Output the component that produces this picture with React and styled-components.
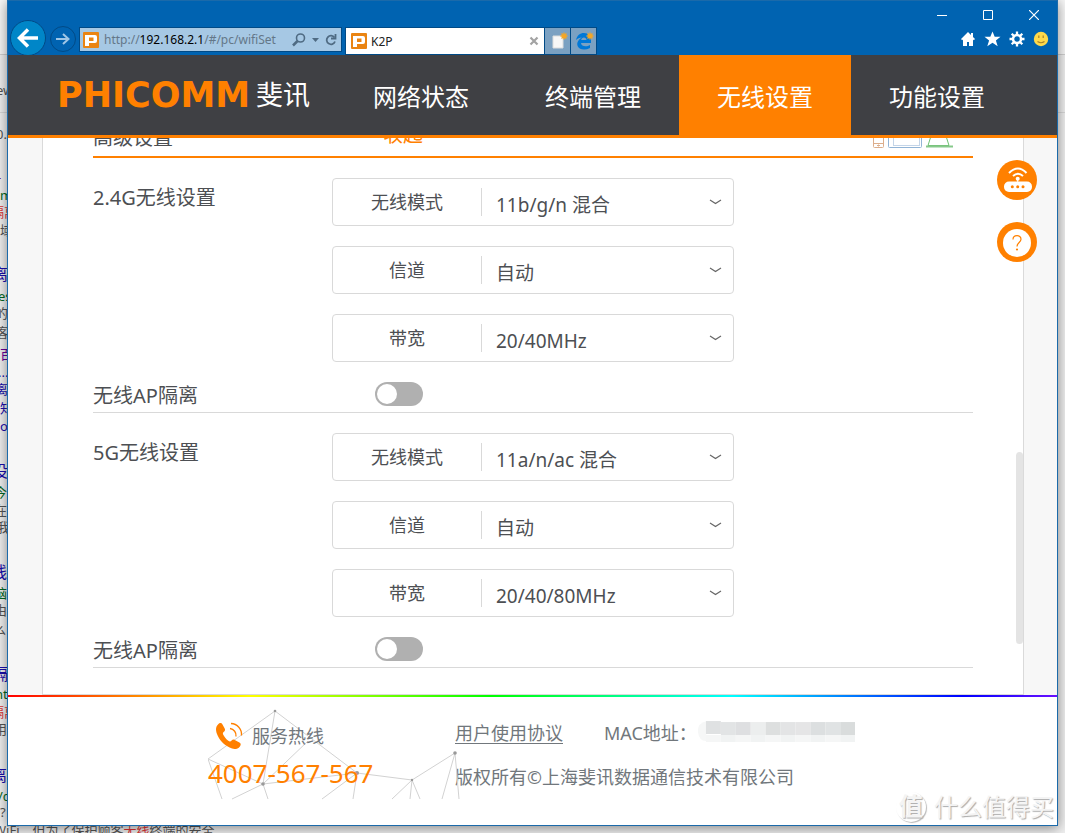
import React, { useState } from "react";
import styled, { createGlobalStyle } from "styled-components";

const orange = "#ff8000";

const GlobalStyle = createGlobalStyle`
    * {
        box-sizing: border-box;
    }
    body {
        margin: 0;
        color: #4d4f53;
        font-family: "Noto Sans", "Noto Sans CJK SC", sans-serif;
    }
    button {
        padding: 0;
        border: 0;
        background: none;
        font-family: inherit;
    }
    a {
        color: inherit;
        text-decoration: none;
    }
`;

/* ---------- desktop ---------- */

const Desktop = styled.div`
    position: relative;
    display: flex;
    min-height: 100vh;
    padding: 0 7px 7px;
    overflow: hidden;
    background: linear-gradient(#f7f7f7 54px, #d0d0d0 54px, #d0d0d0 55px, #efefef 55px, #efefef 112px, #d8d8d8 112px, #d8d8d8 113px, #efefef 113px);
`;

const Snippet = styled.span`
    position: absolute;
    top: ${(props) => props.$top}px;
    left: ${(props) => props.$left || 0}px;
    color: ${(props) => props.$color || "#545454"};
    font-size: ${(props) => (props.$title ? 16 : 13)}px;
    line-height: 18px;
    white-space: nowrap;
    em {
        color: #d33;
        font-style: normal;
    }
`;

const Window = styled.div`
    position: relative;
    display: flex;
    flex: 1;
    flex-direction: column;
    min-width: 0;
    border: 1px solid #1b6aaa;
    background: #fff;
    box-shadow: 0 2px 12px rgba(0, 0, 0, 0.45);
`;

/* ---------- browser chrome ---------- */

const Chrome = styled.div`
    height: 54px;
    background: #0063b1;
`;

const Caption = styled.div`
    display: flex;
    justify-content: flex-end;
    height: 26px;
    button {
        display: grid;
        place-items: center;
        width: 46px;
        height: 28px;
    }
`;

const Toolbar = styled.div`
    display: flex;
    height: 28px;
`;

const BackButton = styled.button`
    display: grid;
    place-items: center;
    width: 36px;
    height: 36px;
    margin: -7px 0 0 2px;
    border: 1px solid #004a86;
    border-radius: 50%;
    background: #0086c8;
`;

const ForwardButton = styled.button`
    display: grid;
    place-items: center;
    width: 26px;
    height: 26px;
    margin: -1px 3px 0 4px;
    border: 1px solid #004a86;
    border-radius: 50%;
`;

const AddressBar = styled.div`
    display: flex;
    align-items: center;
    flex: 0 1 263px;
    height: 25px;
    padding: 0 4px 0 3px;
    border: 1px solid #004a86;
    background: #a6c8e4;
    color: #647788;
    font-size: 12px;
    line-height: 16px;
    .url {
        flex: 1;
        margin-left: 5px;
        overflow: hidden;
        white-space: nowrap;
    }
    b {
        color: #000;
        font-weight: normal;
    }
    button {
        display: grid;
    }
`;

const Tab = styled.div`
    display: flex;
    align-items: center;
    flex: 0 1 200px;
    height: 28px;
    margin-left: 3px;
    padding: 0 5px;
    border: 1px solid #004a86;
    background: #fff;
    color: #222;
    font-size: 12px;
    span {
        flex: 1;
        margin-left: 4px;
    }
    button {
        display: grid;
    }
`;

const TabButton = styled.button`
    display: grid;
    place-items: center;
    width: 26px;
    height: 28px;
    border: 1px solid #004a86;
    border-left: 0;
    background: #7ba1c2;
`;

const Tools = styled.div`
    display: flex;
    align-items: center;
    gap: 8px;
    height: 24px;
    margin: 0 8px 0 auto;
    button {
        display: grid;
    }
`;

/* ---------- router page ---------- */

const Header = styled.header`
    display: flex;
    justify-content: space-between;
    height: 83px;
    padding: 0 34px 0 49px;
    border-bottom: 3px solid ${orange};
    background: #3f4044;
`;

const Logo = styled.a`
    display: flex;
    align-items: center;
    gap: 6px;
    color: #fff;
    font-size: 27px;
    line-height: 82px;
    strong {
        color: ${orange};
        font-family: "DejaVu Sans", sans-serif;
        font-size: 35px;
        font-weight: bold;
    }
`;

const Nav = styled.nav`
    display: flex;
`;

const NavItem = styled.a`
    width: 172px;
    background: ${(props) => (props.$active ? orange : "none")};
    color: #fff;
    font-size: 24px;
    line-height: 84px;
    height: 80px;
    text-align: center;
`;

const Main = styled.main`
    position: relative;
    padding: 0 33px 0 34px;
    background: #f7f7f7;
`;

const Panel = styled.div`
    padding: 0 50px 26px;
    border: 1px solid #dadada;
    border-top: 0;
    background: #fff;
`;

const AdvancedBar = styled.div`
    display: flex;
    align-items: flex-end;
    height: 20px;
    padding: 0 20px 8px 0;
    overflow: hidden;
    border-bottom: 2px solid ${orange};
    font-size: 20px;
    line-height: 20px;
    span {
        width: 290px;
    }
    button {
        margin-right: auto;
        padding-bottom: 3px;
        color: ${orange};
        font-size: 20px;
        line-height: 20px;
    }
`;

const Section = styled.section`
    padding-top: 20px;
    border-bottom: 1px solid #d9d9d9;
    font-size: 20px;
`;

const Row = styled.div`
    display: flex;
`;

const Title = styled.h2`
    width: 239px;
    margin: 0;
    font-size: 20px;
    font-weight: normal;
    line-height: 40px;
`;

const Fields = styled.div`
    display: flex;
    flex: 0 1 402px;
    flex-direction: column;
    gap: 20px;
`;

const FieldBox = styled.div`
    display: flex;
    align-items: center;
    height: 48px;
    border: 1px solid #d9d9d9;
    border-radius: 4px;
    label {
        width: 149px;
        border-right: 1px solid #d9d9d9;
        font-size: 18px;
        line-height: 28px;
        text-align: center;
    }
    select {
        flex: 1;
        height: 46px;
        padding: 6px 0 0 14px;
        border: 0;
        outline: 0;
        appearance: none;
        background: none;
        color: inherit;
        font-family: inherit;
        font-size: 19px;
    }
    svg {
        margin: 0 11px 0 -24px;
        pointer-events: none;
    }
`;

const SwitchRow = styled.div`
    display: flex;
    align-items: center;
    height: 50px;
    padding-top: 14px;
    label {
        width: 282px;
        padding-top: 4px;
        line-height: 24px;
    }
`;

const Switch = styled.input`
    width: 48px;
    height: 24px;
    margin: 0;
    padding: 2px;
    appearance: none;
    border-radius: 12px;
    background: ${(props) => (props.checked ? orange : "#b0b0b0")};
    &::before {
        display: block;
        width: 20px;
        height: 20px;
        margin-left: ${(props) => (props.checked ? 24 : 0)}px;
        border-radius: 50%;
        background: #fff;
        content: "";
    }
`;

const ScrollThumb = styled.div`
    position: absolute;
    right: 34px;
    bottom: 51px;
    width: 7px;
    height: 192px;
    border-radius: 4px;
    background: #e4e4e4;
`;

const SideButtons = styled.div`
    position: absolute;
    top: 22px;
    right: 20px;
    display: grid;
    gap: 22px;
    button {
        display: grid;
    }
`;

const Rainbow = styled.div`
    height: 2px;
    background: linear-gradient(90deg, #f00, #ff0 23%, #0f0 46%, #0ff 69%, #00f 91%, #6a10ff);
`;

const Footer = styled.footer`
    display: flex;
    flex: 1;
    justify-content: center;
    min-height: 128px;
    padding-top: 12px;
    color: #71777c;
    font-size: 18px;
`;

const Hotline = styled.div`
    position: relative;
    width: 247px;
    .net {
        position: absolute;
        top: 0;
        left: 0;
    }
    div {
        position: relative;
        display: flex;
        align-items: center;
        gap: 9px;
        height: 28px;
        margin: 13px 0 0 7px;
        line-height: 28px;
    }
    a {
        position: relative;
        display: block;
        color: ${orange};
        font-size: 26px;
        line-height: 46px;
    }
`;

const Info = styled.div`
    width: 402px;
    p {
        display: flex;
        align-items: center;
        height: 24px;
        margin: 12px 0 20px;
        line-height: 24px;
        white-space: nowrap;
    }
    a {
        margin-right: 41px;
        text-decoration: underline;
        text-underline-offset: 3px;
        text-decoration-thickness: 1px;
    }
    svg {
        margin: 0 2px 2px auto;
    }
`;

const Watermark = styled.div`
    position: absolute;
    right: 3px;
    bottom: 1px;
    display: flex;
    align-items: center;
    gap: 8px;
    color: #f4f4f4;
    font-size: 24px;
    line-height: 34px;
    text-shadow: 1px 1px 1px #aaa;
    i {
        width: 30px;
        height: 30px;
        border-radius: 50%;
        box-shadow: 1px 1px 1px #bbb;
        font-weight: bold;
        font-style: normal;
        line-height: 28px;
        text-align: center;
    }
`;

const Favicon = () => (
    <svg width="16" height="16" viewBox="0 0 16 16">
        <rect width="16" height="16" rx="1" fill="#ea8412" />
        <path d="M2 14V3h10q2 0 2 2v4q0 2-2 2H6v3zM6 5.500v3.500h4.500V5.500z" fill="#fff" fillRule="evenodd" />
    </svg>
);

const Spark = () => (
    <path d="M17 1.500v7M13.500 5h7M14.500 2.500l5 5M19.500 2.500l-5 5" stroke="#f5a623" strokeWidth="1.300" />
);

const Chevron = () => (
    <svg width="13" height="8" viewBox="0 0 13 8" fill="none" stroke="#666" strokeWidth="1.200">
        <path d="M1 2l5.500 3.500L12 2" />
    </svg>
);

const Devices = () => (
    <svg width="80" height="20" viewBox="0 0 80 20" fill="none" strokeWidth="1">
        <g stroke="#dcae8c">
            <rect x=".5" y="-4" width="10" height="23.500" rx="1" />
            <path d="M.5 15.500h10M4 17.500h3M5.500 16.500v2" />
        </g>
        <g stroke="#92b4d6">
            <rect x="15.500" y="-4" width="33" height="23.500" rx="1" />
            <rect x="20.500" y="-4" width="26" height="21.500" stroke="#c4d5e8" />
        </g>
        <g stroke="#6cc070">
            <path d="M58 8l-3 9.500h21L73 8" />
            <path d="M53 18.500h27" stroke="#86c98a" strokeWidth="2" />
        </g>
    </svg>
);

const Net = () => (
    <svg className="net" width="253" height="91" viewBox="0 0 253 91" fill="none">
        <path
            stroke="#d2d2d2"
            d="M67 2L0 50M67 2l-12 73M67 2l82 62M0 50l55 25M55 75l94-11M55 75l45-43M149 64l55 7M204 71l43-27M0 50l14 40M55 75L24 90M55 75l5 15M149 64l-35 26M149 64l-4 26M204 71l-20 19M204 71l-2 19M204 71l8 19M247 44l-13 46M247 44l4 46"
        />
        <g fill="#999">
            <circle cx="67" cy="2" r="1.300" />
            <circle cx="55" cy="75" r="1.800" />
            <circle cx="149" cy="64" r="2" />
            <circle cx="204" cy="71" r="1.200" />
            <circle cx="247" cy="44" r="1.800" />
        </g>
    </svg>
);

const PhoneIcon = () => (
    <svg width="28" height="28" viewBox="0 0 28 28">
        <path fill={orange} d="M3 2.500C5 .5 6.500.8 7.500 2.500l2.200 4c.7 1.300.3 2.500-.8 3.300-1.300 1-1.200 1.900-.5 3.200 1.200 2.300 2.600 4 4.900 5.700 1.300 1 2.200 1 3.300-.2.9-1 2-1.300 3.200-.6l4.600 2.700c1.700 1 1.700 2.300.5 3.800-2.300 3-6.500 3.300-10.300 1.200C8.500 22.500 4 17.500 2 12 .7 8.300.4 5 3 2.500z" />
        <path d="M15 6.500a7 7 0 0 1 6 8M16 1.500a11 11 0 0 1 10.500 12" fill="none" stroke={orange} strokeWidth="1.300" />
    </svg>
);

const mosaic = ["#dfe1e2", "#e2e4e5", "#dedfe1", "#eceeee", "#dddfdf", "#e3e4e5", "#e5e5e6", "#dcdfe0", "#e0e3e4", "#d9dcdc"];

const MaskedMac = () => (
    <svg width="159" height="23" viewBox="0 0 159 23" role="img" aria-label="MAC">
        <path d="M10 0Q0 2 1 11t8 9z" fill="#f6f7f7" />
        {mosaic.map((color, i) => (
            <g key={i}>
                <rect x={9 + i * 15} y={i ? 1 : 0} width="15" height="13" fill={color} />
                <rect x={9 + i * 15} y="14" width="15" height="7" fill={i % 2 ? "#f1f3f3" : "#f5f6f6"} />
            </g>
        ))}
    </svg>
);

const RouterIcon = () => (
    <svg width="40" height="40" viewBox="0 0 40 40" fill="none">
        <circle cx="20" cy="20" r="20" fill={orange} />
        <rect x="7" y="21.500" width="28" height="10.500" rx="5" fill="#fff" />
        <path d="M12 13q9-9 17.500 0M16 16q5-4.500 10 0" stroke="#fff" strokeWidth="2" />
        <circle cx="20.700" cy="18.800" r="2" fill="#fff" />
        <path d="M20.700 19v3" stroke="#fff" />
        <g fill={orange}>
            <circle cx="15.300" cy="26.700" r="1.500" />
            <circle cx="20.700" cy="26.700" r="1.500" />
            <circle cx="26" cy="26.700" r="1.500" />
        </g>
    </svg>
);

const HelpIcon = () => (
    <svg width="40" height="40" viewBox="0 0 40 40" fill="none">
        <circle cx="20" cy="20" r="20" fill={orange} />
        <circle cx="20" cy="21" r="14" fill="#fff" />
        <path d="M16 17.500c0-5 8-5 8-.3 0 3.300-4 3.300-4 7.300" stroke={orange} strokeWidth="1.200" />
        <circle cx="20" cy="27.500" r="1.100" fill={orange} />
    </svg>
);

const Field = ({ id, label, options }) => (
    <FieldBox>
        <label htmlFor={id}>{label}</label>
        <select id={id}>
            {options.map((option) => <option key={option}>{option}</option>)}
        </select>
        <Chevron />
    </FieldBox>
);

const WifiSection = ({ id, title, modes, widths }) => {
    const [isolated, setIsolated] = useState(false);

    return (
        <Section>
            <Row>
                <Title>{title}</Title>
                <Fields>
                    <Field id={`${id}-mode`} label="无线模式" options={modes} />
                    <Field id={`${id}-channel`} label="信道" options={["自动"]} />
                    <Field id={`${id}-width`} label="带宽" options={widths} />
                </Fields>
            </Row>
            <SwitchRow>
                <label htmlFor={`${id}-ap`}>无线AP隔离</label>
                <Switch id={`${id}-ap`} type="checkbox" checked={isolated} onChange={() => setIsolated(!isolated)} />
            </SwitchRow>
        </Section>
    );
};

const BrowserChrome = () => (
    <Chrome>
        <Caption>
            <button aria-label="Minimize">
                <svg width="10" height="10"><path d="M0 5.500h10" stroke="#fff" /></svg>
            </button>
            <button aria-label="Maximize">
                <svg width="10" height="10"><path d="M.5.5h9v9h-9z" fill="none" stroke="#fff" /></svg>
            </button>
            <button aria-label="Close">
                <svg width="10" height="10"><path d="M0 0l10 10M10 0L0 10" stroke="#fff" strokeWidth="1.200" /></svg>
            </button>
        </Caption>
        <Toolbar>
            <BackButton aria-label="Back">
                <svg width="22" height="20" fill="none" stroke="#fff" strokeWidth="3.500">
                    <path d="M21 10H3M11 1.500L2.500 10l8.500 8.500" />
                </svg>
            </BackButton>
            <ForwardButton aria-label="Forward">
                <svg width="14" height="12" fill="none" stroke="#9fc6e6" strokeWidth="2">
                    <path d="M0 6h12M7 1l5.500 5L7 11" />
                </svg>
            </ForwardButton>
            <AddressBar>
                <Favicon />
                <span className="url">http://<b>192.168.2.1</b>/#/pc/wifiSet</span>
                <button aria-label="Search">
                    <svg width="14" height="14" fill="none" stroke="#4f6b83">
                        <circle cx="8.500" cy="5" r="4" strokeWidth="1.600" />
                        <path d="M5.500 8L1 12.500" strokeWidth="2.500" />
                    </svg>
                </button>
                <button aria-label="Address list">
                    <svg width="19" height="14"><path d="M6 5h7l-3.500 4z" fill="#4f6b83" /></svg>
                </button>
                <button aria-label="Refresh">
                    <svg width="12" height="14" fill="none" stroke="#4f6b83" strokeWidth="1.800">
                        <path d="M9.500 4.500A4.300 4.300 0 1 0 10 8.500" />
                        <path d="M10.500 1v4.500H6" />
                    </svg>
                </button>
            </AddressBar>
            <Tab>
                <Favicon />
                <span>K2P</span>
                <button aria-label="Close tab">
                    <svg width="10" height="10"><path d="M1.500 1.500l7 7M8.500 1.500l-7 7" stroke="#a3a3a3" strokeWidth="2.200" /></svg>
                </button>
            </Tab>
            <TabButton aria-label="New tab">
                <svg width="22" height="20" fill="none">
                    <path d="M6 5h10v12H6z" fill="#f7f7f7" stroke="#ddd" />
                    <Spark />
                </svg>
            </TabButton>
            <TabButton aria-label="Open in Edge">
                <svg width="22" height="20" fill="none">
                    <path
                        fill="#0078d7"
                        d="M3 9C4 4.500 7 2 11 2c4.500 0 7 3 7 7.500V12H8c.3 4 6 4 9 2v3c-2 1-4 1.500-6 1.500-6 0-8.500-5-5.500-9C6.500 8 7.500 7 9 6.500 6.500 6.500 4.500 7.500 3 9zM8.200 9H13.500c0-3.500-5-3.500-5.300 0z"
                    />
                    <Spark />
                </svg>
            </TabButton>
            <Tools>
                <button aria-label="Home">
                    <svg width="16" height="16" fill="#fff"><path d="M8 1L1 8l1.200 1.200L3 8.500V15h4v-4h2v4h4V8.500l.8.700L15 8l-2-2V2h-2v2z" /></svg>
                </button>
                <button aria-label="Favorites">
                    <svg width="17" height="16" fill="#fff"><path d="M8.500.5l2.200 5.300h5.800l-4.600 3.600 1.800 5.800-5.200-3.500-5.200 3.500 1.800-5.800L.5 5.800h5.800z" /></svg>
                </button>
                <button aria-label="Settings">
                    <svg width="16" height="16" fill="none" stroke="#fff">
                        <circle cx="8" cy="8" r="4" strokeWidth="2.500" />
                        <path d="M8 .5V4M8 12v3.500M.5 8H4M12 8h3.500M2.700 2.700L5 5M11 11l2.300 2.300M13.300 2.700L11 5M5 11l-2.300 2.300" strokeWidth="2.300" />
                    </svg>
                </button>
                <button aria-label="Feedback">
                    <svg width="16" height="16" fill="none">
                        <circle cx="8" cy="8" r="7.200" fill="#ffd94a" />
                        <path d="M5.800 4.500V7M10.200 4.500V7M4.500 10.500q3.500 2.500 7 0" stroke="#a8832a" strokeWidth="1.200" />
                    </svg>
                </button>
            </Tools>
        </Toolbar>
    </Chrome>
);

// search results lying under the window
const Background = () => (
    <>
        <Snippet $top={81} $left={-4}>ew</Snippet>
        <Snippet $top={125} $left={-4}>0.</Snippet>
        <Snippet $top={168} $left={-3} $color="#609">-</Snippet>
        <Snippet $top={186} $color="#006621">m</Snippet>
        <Snippet $top={203} $left={-9}><em>隔离</em></Snippet>
        <Snippet $top={221}>域</Snippet>
        <Snippet $top={265} $left={-8} $color="#1a0dab" $title>离</Snippet>
        <Snippet $top={287} $left={-2} $color="#006621">es</Snippet>
        <Snippet $top={304} $left={-5}>的</Snippet>
        <Snippet $top={323} $left={-4}>客</Snippet>
        <Snippet $top={345} $color="#609">百</Snippet>
        <Snippet $top={363} $left={-2} $color="#1a0dab">...</Snippet>
        <Snippet $top={380} $left={-5} $color="#1a0dab">离</Snippet>
        <Snippet $top={399} $color="#1a0dab">知</Snippet>
        <Snippet $top={417} $color="#1a0dab">o</Snippet>
        <Snippet $top={462} $left={-8} $color="#1a0dab" $title>没</Snippet>
        <Snippet $top={483} $left={-6} $color="#006621">今</Snippet>
        <Snippet $top={501} $left={-6}>在</Snippet>
        <Snippet $top={518} $left={-3}>我</Snippet>
        <Snippet $top={563} $left={-9} $color="#1a0dab" $title>线</Snippet>
        <Snippet $top={584} $left={-6} $color="#006621">脑</Snippet>
        <Snippet $top={601} $left={-6}>由</Snippet>
        <Snippet $top={620} $left={-7}>么</Snippet>
        <Snippet $top={665} $left={-8} $color="#1a0dab" $title>隔</Snippet>
        <Snippet $top={685} $left={-5} $color="#006621">nt</Snippet>
        <Snippet $top={703} $left={-9}><em>隔离</em></Snippet>
        <Snippet $top={720} $left={-6}>用</Snippet>
        <Snippet $top={766} $left={-9} $color="#1a0dab" $title>离</Snippet>
        <Snippet $top={787} $left={-2} $color="#006621">/c</Snippet>
        <Snippet $top={803}>?</Snippet>
        <Snippet $top={821} $left={-6}>WiFi，但为了保护顾客<em>无线</em>终端的安全</Snippet>
    </>
);

const App = () => (
    <Desktop>
        <GlobalStyle />
        <Background />
        <Window>
            <BrowserChrome />
            <Header>
                <Logo href="#/"><strong>PHICOMM</strong>斐讯</Logo>
                <Nav>
                    <NavItem href="#/status">网络状态</NavItem>
                    <NavItem href="#/devices">终端管理</NavItem>
                    <NavItem href="#/pc/wifiSet" $active>无线设置</NavItem>
                    <NavItem href="#/functions">功能设置</NavItem>
                </Nav>
            </Header>
            <Main>
                <Panel>
                    <AdvancedBar>
                        <span>高级设置</span>
                        <button>收起</button>
                        <Devices />
                    </AdvancedBar>
                    <WifiSection id="g24" title="2.4G无线设置" modes={["11b/g/n 混合"]} widths={["20/40MHz"]} />
                    <WifiSection id="g5" title="5G无线设置" modes={["11a/n/ac 混合"]} widths={["20/40/80MHz"]} />
                </Panel>
                <ScrollThumb />
                <SideButtons>
                    <button aria-label="Router"><RouterIcon /></button>
                    <button aria-label="Help"><HelpIcon /></button>
                </SideButtons>
            </Main>
            <Rainbow />
            <Footer>
                <Hotline>
                    <Net />
                    <div><PhoneIcon />服务热线</div>
                    <a href="tel:4007567567">4007-567-567</a>
                </Hotline>
                <Info>
                    <p><a href="#/agreement">用户使用协议</a>MAC地址：<MaskedMac /></p>
                    <p>版权所有©上海斐讯数据通信技术有限公司</p>
                </Info>
            </Footer>
            <Watermark><i>值</i>什么值得买</Watermark>
        </Window>
    </Desktop>
);

export default App;
